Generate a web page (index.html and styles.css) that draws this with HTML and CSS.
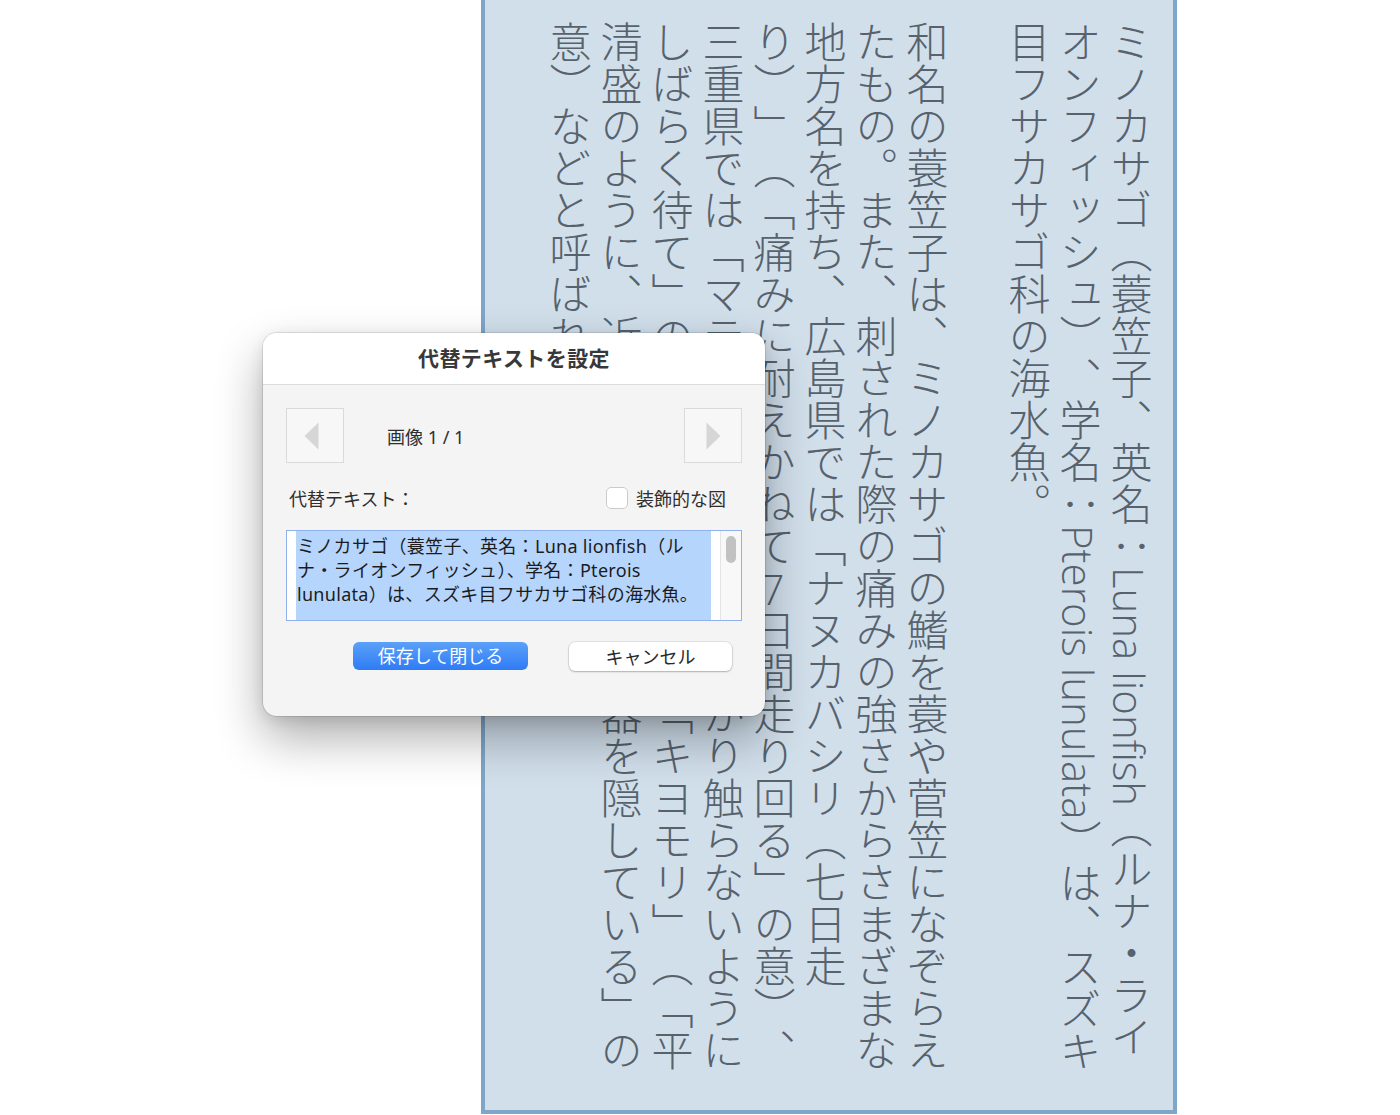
FILE: index.html
```html
<!DOCTYPE html>
<html lang="ja">
<head>
<meta charset="utf-8">
<title>代替テキストを設定</title>
<link rel="stylesheet" href="styles.css">
</head>
<body>
<main class="page">
  <article class="vpanel">
    <p class="para">ミノカサゴ（蓑笠子、英名：Luna lionfish（ルナ・ライ<br>オンフィッシュ）、学名：Pterois lunulata）は、スズキ<br>目フサカサゴ科の海水魚。</p>
    <p class="para">和名の蓑笠子は、ミノカサゴの鰭を蓑や菅笠になぞらえ<br>たもの。また、刺された際の痛みの強さからさまざまな<br>地方名を持ち、広島県では「ナヌカバシリ（七日走<br>り）」（「痛みに耐えかねて<span class="tcy">7</span>日間走り回る」の意）、<br>三重県では「マテシバシ」（「うっかり触らないように<br>しばらく待て」の意）、山口県では「キヨモリ」（「平<br>清盛のように、近寄ると毒のある武器を隠している」の<br>意）などと呼ばれる。</p>
  </article>
</main>

<div class="dialog" role="dialog" aria-label="代替テキストを設定">
  <header class="dlg-title">代替テキストを設定</header>
  <div class="dlg-body">
    <div class="nav-row">
      <button class="nav-btn nav-prev" aria-label="前へ">
        <svg width="15" height="28" viewBox="0 0 15 28"><polygon points="14.5,0.5 14.5,27.5 0.5,14" fill="#d6d6d6"/></svg>
      </button>
      <span class="nav-label">画像 1 / 1</span>
      <button class="nav-btn" aria-label="次へ">
        <svg width="15" height="28" viewBox="0 0 15 28"><polygon points="0.5,0.5 0.5,27.5 14.5,14" fill="#d6d6d6"/></svg>
      </button>
    </div>
    <div class="label-row">
      <span class="field-label">代替テキスト：</span>
      <span class="checkbox"></span>
      <span class="check-label">装飾的な図</span>
    </div>
    <div class="textarea">
      <div class="ta-text">ミノカサゴ（蓑笠子、英名：Luna lionfish（ル<br>ナ・ライオンフィッシュ）、学名：Pterois<br>lunulata）は、スズキ目フサカサゴ科の海水魚。</div>
      <div class="ta-gap"></div>
      <div class="ta-scroll"><div class="ta-thumb"></div></div>
    </div>
    <div class="btn-row">
      <button class="btn btn-primary">保存して閉じる</button>
      <button class="btn btn-plain">キャンセル</button>
    </div>
  </div>
</div>
</body>
</html>
```

FILE: styles.css
```css
html, body {
  margin: 0;
  padding: 0;
  background: #ffffff;
}

body {
  width: 1400px;
  height: 1115px;
  overflow: hidden;
  position: relative;
  font-family: Roboto, "Noto Sans CJK JP", sans-serif;
}

.page {
  display: flex;
  padding-left: 481px;
  height: 1115px;
  box-sizing: border-box;
}

.vpanel {
  writing-mode: vertical-rl;
  text-orientation: mixed;
  width: 696px;
  height: 1114px;
  box-sizing: border-box;
  background: #d1dfeb;
  border: 4px solid #7ea6c8;
  border-top: 0;
  padding: 21px 18px 0 0;
  font-family: "Open Sans", "Noto Sans CJK JP", sans-serif;
  font-weight: 300;
  font-size: 42px;
  line-height: 51px;
  color: #57626d;
  white-space: nowrap;
  overflow: hidden;
  text-spacing-trim: space-all;
}

.para {
  margin: 0;
}

.para + .para {
  margin-block-start: 51px;
}

.tcy {
  text-combine-upright: all;
}

/* dialog */
.dialog {
  position: absolute;
  left: 263px;
  top: 333px;
  width: 502px;
  height: 383px;
  border-radius: 14px;
  background: #f4f4f4;
  overflow: hidden;
  display: flex;
  flex-direction: column;
  box-shadow: 0 0 0 1px rgba(0, 0, 0, 0.10), 0 22px 48px rgba(0, 0, 0, 0.32), 0 4px 14px rgba(0, 0, 0, 0.10);
  font-family: "Noto Sans", "Noto Sans CJK JP", sans-serif;
  color: #2e2e2e;
  font-size: 18px;
}

.dlg-title {
  height: 52px;
  flex: none;
  box-sizing: border-box;
  background: #ffffff;
  border-bottom: 1px solid #dcdcdc;
  display: flex;
  align-items: center;
  justify-content: center;
  font-size: 21px;
  font-weight: 700;
  letter-spacing: 0.4px;
  color: #383838;
  padding-bottom: 4px;
}

.dlg-body {
  padding: 23px 23px 0 23px;
  display: flex;
  flex-direction: column;
}

.nav-row {
  display: flex;
  align-items: center;
  height: 55px;
}

.nav-btn {
  width: 58px;
  height: 55px;
  box-sizing: border-box;
  border: 1.5px solid #dadada;
  background: #f7f7f7;
  padding: 0;
  margin: 0;
  display: flex;
  align-items: center;
  justify-content: center;
}

.nav-prev {
  padding-right: 7px;
}

.nav-label {
  flex: 1;
  margin-left: 43px;
  color: #2e2e2e;
}

.label-row {
  display: flex;
  align-items: center;
  height: 23px;
  margin-top: 23px;
}

.field-label {
  margin-left: 3px;
  flex: 1;
}

.checkbox {
  width: 22px;
  height: 22px;
  box-sizing: border-box;
  border: 1px solid #cbcbcb;
  border-radius: 5px;
  background: #ffffff;
  margin-right: 8px;
}

.check-label {
  margin-right: 16px;
}

.textarea {
  margin-top: 21px;
  height: 91px;
  box-sizing: border-box;
  border: 1.5px solid #8fb1ee;
  background: #ffffff;
  display: flex;
}

.ta-text {
  margin-left: 9px;
  width: 415px;
  flex: none;
  background: #b6d5fd;
  padding: 3px 0 0 1px;
  box-sizing: border-box;
  font-size: 18px;
  line-height: 24px;
  letter-spacing: 0.3px;
  color: #1c1c1c;
  white-space: nowrap;
  overflow: hidden;
}

.ta-gap {
  width: 9px;
  flex: none;
}

.ta-scroll {
  flex: 1;
  background: #f8f8f8;
  border-left: 1px solid #e4e4e4;
  display: flex;
  justify-content: center;
  padding-top: 5px;
}

.ta-thumb {
  width: 10px;
  height: 27px;
  border-radius: 5px;
  background: #c2c2c2;
}

.btn-row {
  display: flex;
  justify-content: flex-end;
  gap: 41px;
  margin-top: 21px;
  padding-right: 10px;
}

.btn {
  font-family: "Noto Sans", "Noto Sans CJK JP", sans-serif;
  font-size: 18px;
  border: 0;
  border-radius: 6px;
  padding: 0 0 2px 0;
  display: flex;
  align-items: center;
  justify-content: center;
}

.btn-primary {
  width: 175px;
  height: 28px;
  background: linear-gradient(#5ba1f9, #2f7bf5);
  color: #ffffff;
}

.btn-plain {
  width: 163px;
  height: 29px;
  background: #ffffff;
  color: #2b2b2b;
  box-shadow: 0 0 0 0.5px rgba(0, 0, 0, 0.14), 0 1px 2px rgba(0, 0, 0, 0.22);
}
```
